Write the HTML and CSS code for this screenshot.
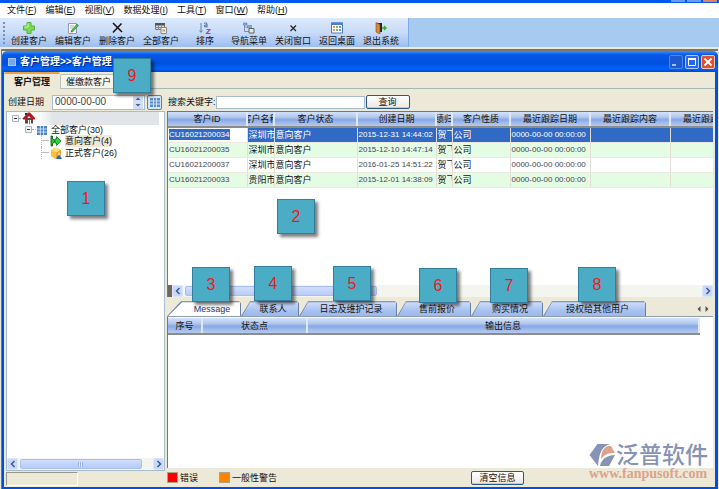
FILE: index.html
```html
<!DOCTYPE html>
<html lang="zh-CN">
<head>
<meta charset="utf-8">
<title>客户管理</title>
<link rel="stylesheet" href="styles.css">
</head>
<body>
<div class="app-strip"><i></i><i></i><i class="close"></i></div>
<nav class="menu">
  <a href="#">文件(<u>F</u>)</a><a href="#">编辑(<u>E</u>)</a><a href="#">视图(<u>V</u>)</a><a href="#">数据处理(<u>I</u>)</a><a href="#">工具(<u>T</u>)</a><a href="#">窗口(<u>W</u>)</a><a href="#">帮助(<u>H</u>)</a>
</nav>
<div class="toolbar">
  <div class="tools">
    <span class="grip"></span>
    <button><svg viewBox="0 0 12 12"><path d="M4 0.500h4v3.500h3.500v4H8v3.500H4V8H0.500V4H4z" fill="#7cdc50" stroke="#50b040"/><path d="M5 1.500v3.500H1.500" fill="none" stroke="#c8f8a8"/></svg>创建客户</button>
    <button><svg viewBox="0 0 12 12"><path d="M1.500 1.500h8v10h-8z" fill="#fff" stroke="#8a9ab8"/><path d="M3 4h4M3 6h3" stroke="#aac"/><path d="M4 9l6-7 1.500 1.500L5.500 10z" fill="#4cc040" stroke="#287838" stroke-width=".6"/><path d="M3.500 10.500l.5-2 1.500 1.500z" fill="#c33"/></svg>编辑客户</button>
    <button><svg viewBox="0 0 12 12"><path d="M2 1l9 9M10.500 1.500L2 10.500" stroke="#111" stroke-width="1.500" fill="none"/></svg>删除客户</button>
    <button><svg viewBox="0 0 12 12"><path d="M.5 1.500h9v6h-9z" fill="#ddd" stroke="#777"/><path d="M0 1h10v2.500H0z" fill="#555"/><path d="M0 5.500h10M3.500 3v5M6.500 3v5" stroke="#888"/><path d="M6 5.500h5.500v6H6z" fill="#f5eedc" stroke="#888"/><path d="M7.500 7.500h2.500v2H7.500z" fill="#b8a078"/></svg>全部客户</button>
    <button><svg viewBox="0 0 12 12"><path d="M2 1v9M.5 8.500L2 10.500l1.500-2" stroke="#6880a8" fill="none"/><path d="M5 1.500q2.500-1.500 3 0v4M8 3q-3-.5-3 1t3 .5" stroke="#4a70b8" fill="none"/><path d="M7.500 7.500h3.500l-3.500 4h4" stroke="#a048a8" fill="none" stroke-width="1.200"/></svg>排序</button>
    <button><svg viewBox="0 0 12 12"><path d="M1.500 2v7.500H6M1.500 5H5" stroke="#88a" fill="none"/><path d="M0 1h4v2H0zM4.500 3.500h4v2.500h-4z" fill="#8cb0e0" stroke="#6078a0" stroke-width=".6"/><path d="M6 6.500h5V11H6z" fill="#f0e8c0" stroke="#567"/></svg>导航菜单</button>
    <button><svg viewBox="0 0 12 12"><path d="M3.500 3.500l5.500 5.500M9 3.500L3.500 9" stroke="#222" stroke-width="1.200"/></svg>关闭窗口</button>
    <button><svg viewBox="0 0 12 12"><path d="M.5 1h11v10H.5z" fill="#fff" stroke="#4a78c0"/><path d="M0 .5h12V3H0z" fill="#4a80d0"/><path d="M2 5h2M2 8h2" stroke="#e07030" stroke-width="1.600"/><path d="M5 5h2M5 8h2" stroke="#40a050" stroke-width="1.600"/><path d="M8 5h2M8 8h2" stroke="#4070d0" stroke-width="1.600"/></svg>返回桌面</button>
    <button><svg viewBox="0 0 12 12"><path d="M1 1h6v9H1z" fill="#222"/><path d="M1 .5l4 2V12l-4-2z" fill="#d88830" stroke="#8a4818" stroke-width=".6"/><path d="M7 6h3.500M9 4l2 2-2 2" stroke="#30b030" stroke-width="1.400" fill="none"/></svg>退出系统</button>
  </div>
</div>
<main class="window">
  <header class="titlebar">
    <span class="app-icon"></span><h1>客户管理&gt;&gt;客户管理</h1>
    <button class="min" aria-label="最小化"><svg viewBox="0 0 12 12"><path d="M2 9h4" stroke="#9cc0f8" stroke-width="2"/></svg></button>
    <button class="max" aria-label="最大化"><svg viewBox="0 0 12 12"><path d="M2.500 3.500h7v6h-7z" fill="none" stroke="#fff"/><path d="M2 3h8" stroke="#fff" stroke-width="2"/></svg></button>
    <button class="close" aria-label="关闭"><svg viewBox="0 0 12 12"><path d="M2.500 2.500l7 7M9.500 2.500l-7 7" stroke="#fff" stroke-width="1.800"/></svg></button>
  </header>
  <div class="page-tabs"><button class="active">客户管理</button><button>催缴款客户</button></div>
  <div class="workspace">
    <section class="side">
      <div class="filter">
        <label for="date">创建日期</label>
        <div class="date-box"><input id="date" value="0000-00-00"><span class="spin"><button aria-label="增加"><svg viewBox="0 0 8 5"><path d="M1.500 4L4 1.500 6.500 4z" fill="#4d6185"/></svg></button><button aria-label="减少"><svg viewBox="0 0 8 5"><path d="M1.500 1L4 3.500 6.500 1z" fill="#4d6185"/></svg></button></span></div>
        <button class="calendar" aria-label="日历"><svg viewBox="0 0 10 9"><path d="M0 0h10v9H0z" fill="#5a8cc8"/><path d="M0 3h10M0 6h10M3.500 0v9M6.500 0v9" stroke="#c8e0f8"/></svg></button>
      </div>
      <div class="tree-panel">
        <ul class="tree">
          <li class="root"><svg class="toggle" viewBox="0 0 7 7"><path d="M.5.5h6v6h-6z" fill="#f4f4f0" stroke="#a4b4c4"/><path d="M2 3.500h3" stroke="#333"/></svg><span class="dots"></span><svg class="ico" viewBox="0 0 12 12"><path d="M2 6h8v5.500H2z" fill="#5a4a40"/><path d="M0 6l5-5.500h2L12 6v1.500H9L6 4 3 7.500H0z" fill="#b81820"/><path d="M2 1h2v2H2z" fill="#333"/><path d="M5 8h3v4H5z" fill="#fff"/><path d="M6 8h1v4H6z" fill="#a66"/></svg><span class="mask"></span></li>
          <li class="level1"><svg class="toggle" viewBox="0 0 7 7"><path d="M.5.5h6v6h-6z" fill="#f4f4f0" stroke="#a4b4c4"/><path d="M2 3.500h3" stroke="#333"/></svg><span class="dots"></span><svg class="ico" viewBox="0 0 12 12"><path d="M1 2h10v9H1z" fill="#4a80c0"/><path d="M1 5h10M1 8h10M4.300 2v9M7.600 2v9" stroke="#c8e0f8"/></svg><span>全部客户(30)</span></li>
          <li class="level2"><span class="dots"></span><svg class="ico" viewBox="0 0 12 12"><path d="M1 1h1.500v3L6 6l-3.500 2.500V11H1z" fill="#20c830" stroke="#084c08" stroke-width=".8"/><path d="M5 4h1.500V1.500L11 6l-4.500 4.500V8H5z" fill="#20e030" stroke="#107020" stroke-width=".8"/></svg><span class="selected">意向客户(4)</span></li>
          <li class="level2"><span class="dots"></span><svg class="ico" viewBox="0 0 12 12"><path d="M1 3l5-2.500L11 3v6l-5 3-5-3z" fill="#f0a020"/><path d="M1 3l5-2.500L11 3 6 5.500z" fill="#ffe078"/><path d="M1 3l5 2.500V12L1 9z" fill="#f8c040"/><path d="M6 12l3-5 3 5z" fill="#2868a8"/><circle cx="9" cy="7" r="1.500" fill="#e8c8a0"/></svg><span>正式客户(26)</span></li>
        </ul>
        <div class="scrollbar"><button aria-label="向左"><svg viewBox="0 0 8 8"><path d="M5.500 1L2.500 4l3 3" fill="none" stroke="#405888" stroke-width="1.500"/></svg></button><div class="track"><span class="thumb side-thumb"></span></div><button aria-label="向右"><svg viewBox="0 0 8 8"><path d="M2.500 1l3 3-3 3" fill="none" stroke="#405888" stroke-width="1.500"/></svg></button></div>
      </div>
      <div class="status"><span></span></div>
    </section>
    <section class="main">
      <div class="filter search"><label for="key">搜索关键字:</label><input id="key"><button class="xp">查询</button></div>
      <div class="grid-panel">
        <table class="grid">
          <colgroup><col class="c-id"><col class="c-name"><col class="c-state"><col class="c-date"><col class="c-owner"><col class="c-kind"><col class="c-wide"><col class="c-wide"><col class="c-wide"></colgroup>
          <thead><tr><th><span>客户ID</span></th><th><span>客户名称</span></th><th><span>客户状态</span></th><th><span>创建日期</span></th><th><span>业绩归属</span></th><th><span>客户性质</span></th><th><span>最近跟踪日期</span></th><th><span>最近跟踪内容</span></th><th><span>最近跟踪方式</span></th></tr></thead>
          <tbody>
            <tr class="current"><td class="num edit"><input aria-label="客户ID" value="CU16021200034"></td><td>深圳市</td><td>意向客户</td><td class="num">2015-12-31 14:44:02</td><td>贺飞</td><td>公司</td><td class="num">0000-00-00 00:00:00</td><td></td><td></td></tr>
            <tr><td class="num">CU16021200035</td><td>深圳市</td><td>意向客户</td><td class="num">2015-12-10 14:47:14</td><td>贺飞</td><td>公司</td><td class="num">0000-00-00 00:00:00</td><td></td><td></td></tr>
            <tr><td class="num">CU16021200037</td><td>深圳市</td><td>意向客户</td><td class="num">2016-01-25 14:51:22</td><td>贺飞</td><td>公司</td><td class="num">0000-00-00 00:00:00</td><td></td><td></td></tr>
            <tr><td class="num">CU16021200033</td><td>贵阳市</td><td>意向客户</td><td class="num">2015-12-01 14:38:09</td><td>贺飞</td><td>公司</td><td class="num">0000-00-00 00:00:00</td><td></td><td></td></tr>
          </tbody>
        </table>
        <div class="scrollbar"><span class="split"></span><button aria-label="向左"><svg viewBox="0 0 8 8"><path d="M5.500 1L2.500 4l3 3" fill="none" stroke="#405888" stroke-width="1.500"/></svg></button><div class="track"><span class="thumb grid-thumb"></span></div><button aria-label="向右"><svg viewBox="0 0 8 8"><path d="M2.500 1l3 3-3 3" fill="none" stroke="#405888" stroke-width="1.500"/></svg></button></div>
      </div>
      <div class="detail-tabs">
        <button class="t1 active"><span>Message</span></button><button class="t2"><span>联系人</span></button><button class="t3"><span>日志及维护记录</span></button><button class="t4"><span>售前报价</span></button><button class="t5"><span>购买情况</span></button><button class="t6"><span>授权给其他用户</span></button>
        <div class="pager"><button aria-label="上一页"><svg viewBox="0 0 6 8"><path d="M4.500 1v6L1.500 4z" fill="#555"/></svg></button><button aria-label="下一页"><svg viewBox="0 0 6 8"><path d="M1.500 1v6l3-3z" fill="#555"/></svg></button></div>
      </div>
      <div class="message-panel">
        <table class="messages"><colgroup><col class="m-no"><col class="m-state"><col></colgroup><thead><tr><th>序号</th><th>状态点</th><th>输出信息</th></tr></thead></table>
        <div class="watermark">
          <svg viewBox="0 0 26 24"><path d="M0.500 12L8.500 1H21C14 3 10 8 9 23z" fill="#8792b4"/><path d="M12 16C12 9 15 4 19 3h3l4 7c-7 0-10 1-14 6z" fill="#dda28c"/><path d="M11 23c1-6 6-11 15-11l-6 11z" fill="#8792b4"/></svg><strong>泛普软件</strong>
          <p>www.fanpusoft.com</p>
        </div>
      </div>
      <footer class="legend"><span class="item error">错误</span><span class="item warn">一般性警告</span><button class="xp">清空信息</button></footer>
    </section>
  </div>
</main>
<span class="badge b1">1</span><span class="badge b2">2</span><span class="badge b3">3</span><span class="badge b4">4</span><span class="badge b5">5</span><span class="badge b6">6</span><span class="badge b7">7</span><span class="badge b8">8</span><span class="badge b9">9</span>
</body>
</html>
```
FILE: styles.css
```css
:root {
  --beige: #ece9d8;
  --blue: #0050e0;
  --bar: linear-gradient(#d4e2fa, #b4c9f0 35%, #88a8e2 55%, #a4bdec 80%, #b4c9f0);
}
* { box-sizing: border-box; }
body {
  margin: 0;
  height: 100vh;
  display: flex;
  flex-direction: column;
  position: relative;
  overflow: hidden;
  background: var(--beige);
  color: #111;
  font: 9px/12px "Liberation Sans", "Noto Sans CJK SC", sans-serif;
}
button, input { font: inherit; color: inherit; margin: 0; padding: 0; border: 0; background: none; }
svg { display: block; }

.app-strip { height: 3px; background: #0058f0; display: flex; justify-content: flex-end; gap: 2px; padding: 0 2px; flex: none; }
.app-strip i { width: 14px; height: 2px; background: #6a9cf0; }
.app-strip .close { background: #e88060; }
.menu { height: 15px; padding: 0 7px; display: flex; gap: 9px; background: #fff; flex: none; line-height: 14px; }
.menu a { color: inherit; text-decoration: none; }
.menu u { text-underline-offset: 1px; }

.toolbar { background: #a6caf0; border-bottom: 2px solid var(--beige); height: 31px; flex: none; }
.tools { display: grid; grid-template-columns: 7px repeat(9, 44px); width: max-content; height: 29px; padding-right: 5px; background: linear-gradient(#dce9fb, #c8dbf8 50%, #9dbdf0); border-right: 1px solid #7ea8e8; }
.tools button { display: flex; flex-direction: column; align-items: center; gap: 1px; padding-top: 4px; white-space: nowrap; line-height: 13px; }
.tools svg { width: 12px; height: 12px; flex: none; }
.grip { width: 2px; margin: 4px 3px; background: repeating-linear-gradient(#7890b8 0 2px, transparent 2px 4px); }

.window { flex: 1; min-height: 0; display: flex; flex-direction: column; margin: 0 1px; border-top: 2px solid #77756c; border-left: 1px solid #77756c; }
.titlebar { height: 21px; flex: none; display: flex; align-items: center; gap: 2px; padding: 0 3px 0 6px; border-radius: 5px 5px 0 0; background: linear-gradient(#3c90ff, #0858e8 18%, #0050e0 60%, #0064fc 85%, #0048c8); color: #fff; }
.app-icon { width: 8px; height: 8px; background: #78a8e8; border: 1px solid #a8c8f8; margin-right: 2px; }
h1 { margin: 0 auto 0 0; font-size: 10px; line-height: 14px; text-shadow: 1px 1px #0a2c80; }
.titlebar button { width: 14px; height: 14px; border: 1px solid #a8c8ff; border-radius: 2px; background: #2c68e4; }
.titlebar .min { background: #2058d0; border-color: #5088e8; }
.titlebar .close { background: #e0502c; border-color: #f8c8b8; }

.page-tabs { height: 17px; flex: none; display: flex; align-items: flex-end; background: var(--beige); border: solid var(--blue); border-width: 0 3px 0 2px; box-shadow: inset 0 -1px #a4b8b8; }
.page-tabs button { height: 15px; padding: 0 5px; background: #f6f5ee; border: 1px solid #b8c0b8; border-radius: 2px 2px 0 0; }
.page-tabs .active { height: 17px; padding: 0 10px; font-weight: bold; border: 0; border-top: 2px solid #f0a040; background: var(--beige); }
.workspace { flex: 1; min-height: 0; display: flex; gap: 2px; padding: 4px 2px 0; background: var(--beige); border: solid var(--blue); border-width: 0 3px 2px 2px; }

.side { width: 159px; flex: none; display: flex; flex-direction: column; }
.filter { height: 18px; flex: none; display: flex; align-items: center; padding-left: 2px; white-space: nowrap; }
.date-box { margin-left: 8px; width: 93px; height: 15px; background: #fff; border: 1px solid #a8bccc; display: flex; padding-right: 1px; }
.date-box input { width: 82px; min-width: 0; padding-left: 2px; font-size: 10px; color: #444; }
.spin { width: 10px; display: grid; flex: none; }
.spin button { background: #d0defa; border-radius: 1px; display: grid; place-items: center; }
.spin svg { width: 8px; height: 5px; }
.calendar { margin-left: 2px; width: 15px; height: 15px; border: 1px solid #5a80b0; border-radius: 2px; background: #d8e6f4; display: grid; place-items: center; }
.calendar svg { width: 10px; height: 9px; }
.tree-panel { flex: 1; min-height: 0; display: flex; flex-direction: column; justify-content: space-between; background: #fff; border: 1px solid #a8bccc; }
.tree { list-style: none; margin: 0; padding: 0 5px; }
.tree li { display: flex; align-items: center; height: 11px; white-space: nowrap; }
.tree .root { height: 12px; }
.tree .level1 { padding-left: 13px; }
.tree .level2 { padding-left: 29px; height: 12px; }
.toggle { width: 7px; height: 7px; flex: none; }
.ico { width: 12px; height: 12px; flex: none; margin-right: 3px; }
.dots { width: 4px; border-top: 1px dotted #aaa; flex: none; }
.level2 .dots { width: 9px; border-left: 1px dotted #bbb; height: 100%; border-top: 0; background: linear-gradient(#bbb, #bbb) 0 5px / 7px 1px no-repeat; }
.selected { background: var(--beige); }
.mask { flex: 1; height: 13px; background: linear-gradient(90deg, #fff, #e2e5e7 15px); }

.scrollbar { display: flex; align-items: stretch; height: 12px; flex: none; background: #f5f5f0; }
.scrollbar button { width: 11px; flex: none; display: grid; place-items: center; background: #c8d8fa; border: 1px solid #dce6fa; border-radius: 2px; }
.scrollbar svg { width: 8px; height: 8px; }
.track { flex: 1; display: flex; }
.thumb { display: flex; align-items: center; justify-content: center; margin: 1px 2px; border: 1px solid #a8c0f0; border-radius: 2px; background: linear-gradient(#d0defc, #b8ccf8); }
.thumb::before { content: ""; width: 5px; height: 5px; background: repeating-linear-gradient(90deg, #98b4e8 0 1px, #e0eafe 1px 2px); }
.side-thumb { width: 90%; }
.grid-thumb { width: 37%; }
.split { width: 4px; background: #6c6860; flex: none; }
.status { height: 16px; flex: none; padding-top: 1px; }
.status span { display: block; width: 72px; height: 14px; border: 1px solid #fff; border-top-color: #99968a; border-left-color: #99968a; }

.main { flex: 1; min-width: 0; display: flex; flex-direction: column; }
.search { padding-left: 1px; }
.search input { width: 149px; height: 13px; background: #fff; border: 1px solid #a8bccc; }
.xp { width: 44px; height: 14px; border: 1px solid #2c5888; border-radius: 2px; background: linear-gradient(#fff, #ece8e0); box-shadow: inset 0 -1px #c8c8d8; line-height: 12px; }
.search .xp { margin-left: 1px; }
.grid-panel { flex: 187; min-height: 0; overflow: hidden; display: flex; flex-direction: column; justify-content: space-between; background: #fff; border: solid #77756c; border-width: 1px 0 0 1px; }
table { border-collapse: collapse; table-layout: fixed; }
.grid { width: 582px; align-self: flex-start; }
.c-id { width: 79px; } .c-name { width: 27px; } .c-state { width: 83px; } .c-date { width: 79px; }
.c-owner { width: 16px; } .c-kind { width: 58px; } .c-wide { width: 80px; }
th { height: 15px; padding: 0; background: var(--bar); border-right: 2px solid #dfe8f8; border-bottom: 2px solid #8c8c88; font-weight: normal; line-height: 12px; }
th span { display: flex; justify-content: center; overflow: hidden; white-space: nowrap; }
td { height: 15px; padding: 0 1px; border-right: 1px solid #e4dfd6; border-bottom: 1px solid #ece9e0; overflow: hidden; white-space: nowrap; line-height: 12px; }
tbody tr:nth-child(even) { background: #e4fce4; }
tbody .current { background: #316ac5; color: #fff; }
.num { font-size: 8px; color: #445; }
.current .num { color: #fff; }
.grid .edit { background: #fff; }
.edit input { display: block; width: 61px; height: 11px; background: #316ac5; color: #fff; }

.detail-tabs { height: 20px; flex: none; display: flex; align-items: flex-end; border-bottom: 1px solid #8c9cac; }
.detail-tabs > button { height: 15px; position: relative; z-index: 0; background: #6880a8; clip-path: polygon(0 100%, 9px 0, calc(100% - 2px) 0, 100% 2px, 100% 100%); white-space: nowrap; padding-left: 6px; }
.detail-tabs > button::before { content: ""; position: absolute; z-index: -1; inset: 1px 1px 0; background: linear-gradient(#d0dffa, #a8c2f0 60%, #9cb8ec); clip-path: polygon(0 100%, 8px 0, 100% 0, 100% 100%); }
.detail-tabs > .active { clip-path: polygon(0 100%, 14px 0, calc(100% - 2px) 0, 100% 2px, 100% 100%); padding-left: 16px; color: #336; }
.detail-tabs > .active::before { background: #fff; clip-path: polygon(0 100%, 14px 0, 100% 0, 100% 100%); }
.t1 { width: 74px; } .t2 { width: 58px; } .t3 { width: 98px; } .t4 { width: 74px; } .t5 { width: 72px; } .t6 { width: 103px; }
.pager { margin: 0 3px 3px auto; display: flex; gap: 2px; }
.pager svg { width: 6px; height: 8px; }
.message-panel { flex: 151; min-height: 0; position: relative; background: #fff; border-left: 1px solid #77756c; padding-top: 1px; }
.messages { width: calc(100% - 13px); }
.messages th { height: 16px; }
.m-no { width: 34px; } .m-state { width: 105px; }
.legend { height: 19px; flex: none; display: flex; align-items: center; }
.item { display: flex; align-items: center; gap: 2px; width: 52px; white-space: nowrap; }
.item::before { content: ""; width: 9px; height: 9px; border: 1px solid #a8a090; flex: none; }
.error::before { background: #f00; }
.warn::before { background: #ff8400; }
.legend .xp { width: 53px; margin-left: 200px; }

.watermark { position: absolute; right: 4px; bottom: -12px; width: 120px; display: grid; grid-template-columns: 26px 1fr; align-items: center; gap: 0 1px; }
.watermark svg { width: 26px; height: 24px; }
.watermark strong { font-size: 23px; line-height: 26px; font-weight: 500; color: #8792b4; white-space: nowrap; }
.watermark p { grid-column: 1 / -1; margin: 0; font: bold 14px/12px "Liberation Serif", serif; color: #dda28c; }

.badge { position: absolute; width: 38px; height: 35px; background: #4bacc6; border: 1px solid #357d9c; box-shadow: 3px 3px 3px rgba(0, 0, 0, .5); color: #f01820; font-size: 16px; line-height: 33px; text-align: center; }
.b1 { left: 67px; top: 181px; }
.b2 { left: 277px; top: 199px; }
.b3 { left: 192px; top: 267px; }
.b4 { left: 254px; top: 266px; }
.b5 { left: 333px; top: 266px; }
.b6 { left: 419px; top: 268px; }
.b7 { left: 490px; top: 268px; }
.b8 { left: 578px; top: 267px; }
.b9 { left: 113px; top: 58px; }
```
